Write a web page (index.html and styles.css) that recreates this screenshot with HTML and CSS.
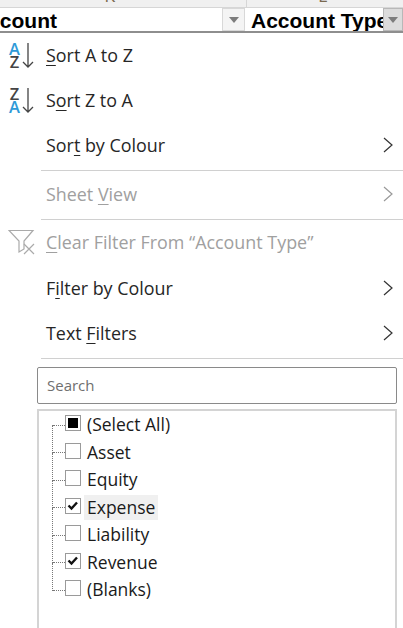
FILE: index.html
```html
<!DOCTYPE html>
<html lang="en">
<head>
    <meta charset="UTF-8">
    <meta name="viewport" content="width=device-width, initial-scale=1.0">
    <title>Account Type filter</title>
    <link rel="stylesheet" href="styles.css">
</head>
<body>
    <div class="col-letters">
        <div class="col-letter col-k"><span>K</span></div>
        <div class="col-letter col-l"><span>L</span></div>
    </div>
    <div class="header-row">
        <div class="cell cell-account"><span class="cut-text">Account</span></div>
        <div class="drop-btn"><i class="tri"></i></div>
        <div class="cell cell-type">Account Type</div>
        <div class="drop-btn drop-active"><i class="tri"></i></div>
    </div>

    <div class="menu-item">
        <div class="az-icon"><span class="letters"><b class="blue">A</b><b>Z</b></span>
            <svg width="12" height="26" viewBox="0 0 12 26"><path d="M6 1V25M1 20l5 5 5-5" fill="none" stroke="#444" stroke-width="1.3"/></svg>
        </div>
        <span class="label"><u>S</u>ort A to Z</span>
    </div>
    <div class="menu-item">
        <div class="az-icon"><span class="letters"><b>Z</b><b class="blue">A</b></span>
            <svg width="12" height="26" viewBox="0 0 12 26"><path d="M6 1V25M1 20l5 5 5-5" fill="none" stroke="#444" stroke-width="1.3"/></svg>
        </div>
        <span class="label">S<u>o</u>rt Z to A</span>
    </div>
    <div class="menu-item">
        <span class="label">Sor<u>t</u> by Colour</span>
        <svg class="chev" width="10" height="16" viewBox="0 0 10 16"><path d="M1 1l8 7-8 7" fill="none" stroke="#333" stroke-width="1.2"/></svg>
    </div>
    <div class="sep"></div>
    <div class="menu-item disabled view-row">
        <span class="label">Sheet <u>V</u>iew</span>
        <svg class="chev" width="10" height="16" viewBox="0 0 10 16"><path d="M1 1l8 7-8 7" fill="none" stroke="#999" stroke-width="1.2"/></svg>
    </div>
    <div class="sep flush"></div>
    <div class="menu-item disabled clear-row">
        <svg class="funnel" width="28" height="28" viewBox="0 0 28 28"><path d="M1 1.500H25L16 12V20L11 23V12Z" fill="#fff" stroke="#aaa" stroke-width="1.2"/><path d="M16 15l10 10M26 15l-10 10" stroke="#aaa" stroke-width="1.2"/></svg>
        <span class="label"><u>C</u>lear Filter From “Account Type”</span>
    </div>
    <div class="menu-item">
        <span class="label">F<u>i</u>lter by Colour</span>
        <svg class="chev" width="10" height="16" viewBox="0 0 10 16"><path d="M1 1l8 7-8 7" fill="none" stroke="#333" stroke-width="1.2"/></svg>
    </div>
    <div class="menu-item">
        <span class="label">Text <u>F</u>ilters</span>
        <svg class="chev" width="10" height="16" viewBox="0 0 10 16"><path d="M1 1l8 7-8 7" fill="none" stroke="#333" stroke-width="1.2"/></svg>
    </div>
    <div class="sep"></div>

    <div class="search-box">Search</div>

    <div class="tree">
        <div class="tree-row"><i class="check mixed"></i><span>(Select All)</span></div>
        <div class="tree-row"><i class="check"></i><span>Asset</span></div>
        <div class="tree-row"><i class="check"></i><span>Equity</span></div>
        <div class="tree-row"><i class="check">
            <svg width="14" height="14" viewBox="0 0 14 14"><path d="M2.500 6.500l3 3 5.500-6" fill="none" stroke="#111" stroke-width="2.400"/></svg>
        </i><span class="hover">Expense</span></div>
        <div class="tree-row"><i class="check"></i><span>Liability</span></div>
        <div class="tree-row"><i class="check">
            <svg width="14" height="14" viewBox="0 0 14 14"><path d="M2.500 6.500l3 3 5.500-6" fill="none" stroke="#111" stroke-width="2.400"/></svg>
        </i><span>Revenue</span></div>
        <div class="tree-row last"><i class="check"></i><span>(Blanks)</span></div>
    </div>
</body>
</html>
```

FILE: styles.css
```css
body {
    margin: 0;
    width: 403px;
    height: 628px;
    overflow: hidden;
    background-color: #ffffff;
    color: #262626;
    font-family: "Open Sans", "Noto Sans", sans-serif;
    font-size: 17.900px;
}
u {
    text-underline-offset: 3px;
    text-decoration-thickness: 1px;
}

/* sheet header */
.col-letters {
    display: flex;
    height: 7px;
    background-color: #f0f0f0;
    border-bottom: 1px solid #d6d6d6;
    color: #7a6a50;
    font-family: "Liberation Sans", sans-serif;
    font-size: 16px;
    overflow: hidden;
}
.col-letter {
    text-align: center;
    line-height: 1;
    box-sizing: border-box;
}
.col-letter span {
    display: block;
    margin-top: -11px;
}
.col-k {
    width: 247px;
    padding-right: 26px;
    border-right: 1px solid #d6d6d6;
}
.col-l {
    width: 156px;
    padding-right: 4px;
}
.header-row {
    display: flex;
    height: 23px;
    border-bottom: 2px solid #8e8e8e;
    color: #000000;
    font-family: "Liberation Sans", sans-serif;
    font-weight: bold;
    font-size: 21px;
    line-height: 25px;
}
.cell {
    overflow: hidden;
    white-space: nowrap;
}
.cell-account {
    width: 222px;
}
.cut-text {
    margin-left: -27px;
}
.cell-type {
    width: 138px;
    padding-left: 6px;
    box-sizing: border-box;
}
.drop-btn {
    width: 23px;
    display: flex;
    align-items: center;
    justify-content: center;
    background-color: #f4f4f4;
    border: 1px solid #d8d8d8;
    box-sizing: border-box;
}
.drop-active {
    width: 20px;
    background-color: #dcdcdc;
    border-color: #b8b8b8;
}
.tri {
    border-left: 5px solid transparent;
    border-right: 5px solid transparent;
    border-top: 6px solid #7c7c7c;
}

/* menu */
.menu-item {
    display: flex;
    align-items: center;
    height: 45px;
    position: relative;
    padding-left: 46px;
    padding-right: 10px;
}
.menu-item.view-row {
    height: 48px;
}
.menu-item.clear-row {
    height: 46px;
}
.label {
    margin-top: -2px;
}
.disabled {
    color: #a0a0a0;
}
.chev {
    margin-left: auto;
    margin-top: -2px;
}
.sep {
    height: 1px;
    margin-top: 2px;
    margin-left: 41px;
    background-color: #d0d0d0;
}
.sep.flush {
    margin-top: 0;
}
.az-icon {
    position: absolute;
    left: 9px;
    top: 9px;
    display: flex;
    align-items: center;
    gap: 2px;
}
.letters {
    display: flex;
    flex-direction: column;
    align-items: center;
    font-family: "Open Sans", sans-serif;
    font-size: 16.500px;
    line-height: 13px;
    color: #444444;
}
.letters b {
    font-weight: 600;
}
.blue {
    color: #2e9ad8;
}
.funnel {
    position: absolute;
    left: 8px;
    top: 9px;
}

/* search and checkbox list */
.search-box {
    box-sizing: border-box;
    height: 37px;
    margin: 8px 6px 5px 37px;
    padding-left: 9px;
    border: 1px solid #8a8a8a;
    border-radius: 2px;
    color: #6f6f6f;
    font-size: 15px;
    line-height: 35px;
}
.tree {
    height: 230px;
    margin: 0 6px 0 37px;
    border: 1px solid #d4d4d4;
    border-width: 2px 2px 0 2px;
    color: #1a1a1a;
    font-size: 17.500px;
}
.tree-row {
    display: flex;
    align-items: center;
    height: 27.500px;
    padding-left: 26px;
    position: relative;
}
.tree-row::before {
    content: "";
    width: 12px;
    margin-top: 1px;
    border-top: 1px dotted #777777;
    margin-left: -12px;
    align-self: center;
}
.tree-row::after {
    content: "";
    position: absolute;
    left: 13px;
    top: 14px;
    height: 28px;
    border-left: 1px dotted #777777;
}
.tree-row.last::after {
    display: none;
}
.check {
    box-sizing: border-box;
    width: 16px;
    height: 16px;
    border: 1px solid #9a9a9a;
    display: flex;
    align-items: center;
    justify-content: center;
    background-color: #ffffff;
    margin-top: -3px;
    margin-right: 3px;
}
.check.mixed::before {
    content: "";
    width: 10px;
    height: 10px;
    background-color: #000000;
}
.tree-row span {
    padding: 1px 3px 2px;
    line-height: 22px;
}
.hover {
    background-color: #f0f0f0;
}
```
